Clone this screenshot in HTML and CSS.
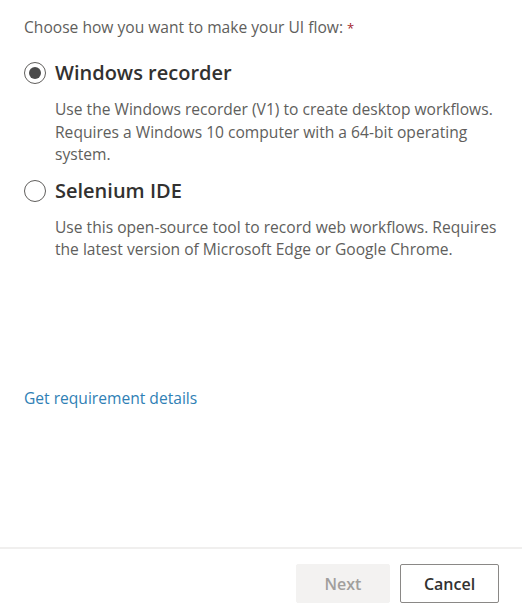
FILE: index.html
```html
<!DOCTYPE html>
<html lang="en">
<head>
<meta charset="utf-8">
<title>UI flow</title>
<link rel="stylesheet" href="styles.css">
</head>
<body>
<div class="dialog">
  <main class="content">
    <p class="label">Choose how you want to make your UI flow: <span class="req">*</span></p>
    <div class="option">
      <div class="option-head">
        <span class="radio checked"></span>
        <span class="option-title">Windows recorder</span>
      </div>
      <p class="option-desc">Use the Windows recorder (V1) to create desktop workflows. Requires a Windows 10 computer with a 64-bit operating system.</p>
    </div>
    <div class="option">
      <div class="option-head">
        <span class="radio"></span>
        <span class="option-title">Selenium IDE</span>
      </div>
      <p class="option-desc">Use this open-source tool to record web workflows. Requires the latest version of Microsoft Edge or Google Chrome.</p>
    </div>
    <a class="link" href="#">Get requirement details</a>
  </main>
  <footer class="footer">
    <button class="btn btn-disabled" type="button">Next</button>
    <button class="btn btn-default" type="button">Cancel</button>
  </footer>
</div>
</body>
</html>
```
FILE: styles.css
```css
html, body {
  margin: 0;
  padding: 0;
  background: #ffffff;
}
body {
  font-family: "Open Sans", "Noto Sans", "Liberation Sans", sans-serif;
  color: #323130;
}
.dialog {
  width: 522px;
  height: 608px;
  display: flex;
  flex-direction: column;
}
.content {
  flex: 1;
  padding: 17px 24px 0;
  display: flex;
  flex-direction: column;
  align-items: flex-start;
}
.label {
  margin: 0;
  font-size: 15.6px;
  line-height: 20px;
  color: #605e5c;
}
.req {
  color: #a4262c;
  font-size: 13px;
}
.option {
  display: flex;
  flex-direction: column;
}
.option:first-of-type {
  margin-top: 21px;
}
.option + .option {
  margin-top: 11px;
}
.option-head {
  display: flex;
  align-items: center;
  gap: 9px;
  height: 28px;
}
.radio {
  box-sizing: border-box;
  width: 22px;
  height: 22px;
  border: 1.5px solid #605e5c;
  border-radius: 50%;
  display: flex;
  align-items: center;
  justify-content: center;
}
.radio.checked::after {
  content: "";
  width: 12px;
  height: 12px;
  border-radius: 50%;
  background: #4a4a4a;
}
.option-title {
  font-size: 20px;
  font-weight: 600;
  color: #323130;
  line-height: 28px;
}
.option-desc {
  margin: 11px 0 0 31px;
  font-size: 15.6px;
  line-height: 22.5px;
  color: #605e5c;
  max-width: 450px;
}
.link {
  margin-top: 127px;
  font-size: 15.6px;
  line-height: 20px;
  color: #2f7fb5;
  text-decoration: none;
}
.footer {
  border-top: 2px solid #f0efee;
  padding: 15px 23px 5px 0;
  display: flex;
  justify-content: flex-end;
  gap: 10px;
}
.btn {
  box-sizing: border-box;
  height: 39px;
  font-family: inherit;
  font-size: 16px;
  font-weight: 600;
  border-radius: 2px;
  padding: 0;
}
.btn-disabled {
  width: 94px;
  background: #f3f2f1;
  border: 1px solid #f3f2f1;
  color: #a19f9d;
}
.btn-default {
  width: 99px;
  background: #ffffff;
  border: 1px solid #8a8886;
  color: #323130;
}
```
